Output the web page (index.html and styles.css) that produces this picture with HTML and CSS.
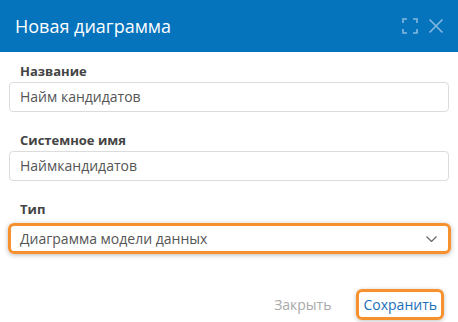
FILE: index.html
```html
<!DOCTYPE html>
<html lang="ru">
<head>
<meta charset="utf-8">
<link rel="stylesheet" href="styles.css">
</head>
<body>
<div class="dialog">
  <div class="header">
    <div class="title">Новая диаграмма</div>
    <div class="tools">
      <svg class="icon" width="16" height="16" viewBox="0 0 16 16" fill="none" stroke="currentColor" stroke-width="1.6">
        <path d="M1 5V1H5M11 1H15V5M15 11V15H11M5 15H1V11"/>
      </svg>
      <svg class="icon" width="16" height="16" viewBox="0 0 16 16" fill="none" stroke="currentColor" stroke-width="1.6">
        <path d="M1.5 1.5L14.5 14.5M14.5 1.5L1.5 14.5"/>
      </svg>
    </div>
  </div>
  <div class="body">
    <div class="field">
      <div class="label">Название</div>
      <div class="input">Найм кандидатов</div>
    </div>
    <div class="field">
      <div class="label">Системное имя</div>
      <div class="input">Наймкандидатов</div>
    </div>
    <div class="field">
      <div class="label">Тип</div>
      <div class="select">
        <span>Диаграмма модели данных</span>
        <svg class="chev" width="11" height="6" viewBox="0 0 11 6" fill="none" stroke="#666" stroke-width="1.2">
          <path d="M0.5 0.5L5.5 5.5L10.5 0.5"/>
        </svg>
      </div>
    </div>
  </div>
  <div class="footer">
    <div class="btn btn-close">Закрыть</div>
    <div class="btn btn-save">Сохранить</div>
  </div>
</div>
</body>
</html>
```
FILE: styles.css
```css
html, body {
  margin: 0;
  padding: 0;
  background: #ffffff;
}
body {
  font-family: "Open Sans", "Liberation Sans", sans-serif;
  width: 458px;
  height: 322px;
  overflow: hidden;
}
.dialog {
  display: flex;
  flex-direction: column;
}
.header {
  height: 52px;
  background: #0673bd;
  display: flex;
  align-items: center;
  justify-content: space-between;
  padding: 0 14px 0 15px;
}
.title {
  color: #ffffff;
  font-size: 18px;
  line-height: 24px;
  margin-top: -1px;
}
.tools {
  display: flex;
  gap: 10px;
  color: rgba(255, 255, 255, 0.5);
}
.icon {
  display: block;
}
.body {
  display: flex;
  flex-direction: column;
  gap: 19px;
  padding: 10px 9px 0 9px;
}
.field {
  display: flex;
  flex-direction: column;
}
.label {
  font-size: 13px;
  line-height: 18px;
  font-weight: 700;
  color: #444444;
  padding-left: 11px;
  margin-bottom: 2px;
}
.input {
  height: 28px;
  border: 1px solid #dcdcdc;
  border-radius: 4px;
  padding: 0 10px;
  font-size: 14px;
  line-height: 27px;
  color: #555555;
}
.select {
  margin: 3px -2px 0 -1px;
  height: 25px;
  border: 3px solid #f7912d;
  border-radius: 6px;
  box-shadow: 0 1px 5px rgba(0, 0, 0, 0.28);
  padding: 0 11px 0 9px;
  display: flex;
  align-items: center;
  justify-content: space-between;
  font-size: 14px;
  line-height: 24px;
  color: #555555;
}
.footer {
  display: flex;
  justify-content: flex-end;
  gap: 18px;
  padding: 35px 14px 0 0;
}
.btn {
  font-size: 14px;
  line-height: 25px;
  height: 25px;
  padding: 0 4px;
  border: 3px solid transparent;
  border-radius: 6px;
}
.btn-close {
  color: #a9a9a9;
}
.btn-save {
  color: #1a6fb8;
  border-color: #f7912d;
  box-shadow: 0 1px 4px rgba(0, 0, 0, 0.25);
}
```
